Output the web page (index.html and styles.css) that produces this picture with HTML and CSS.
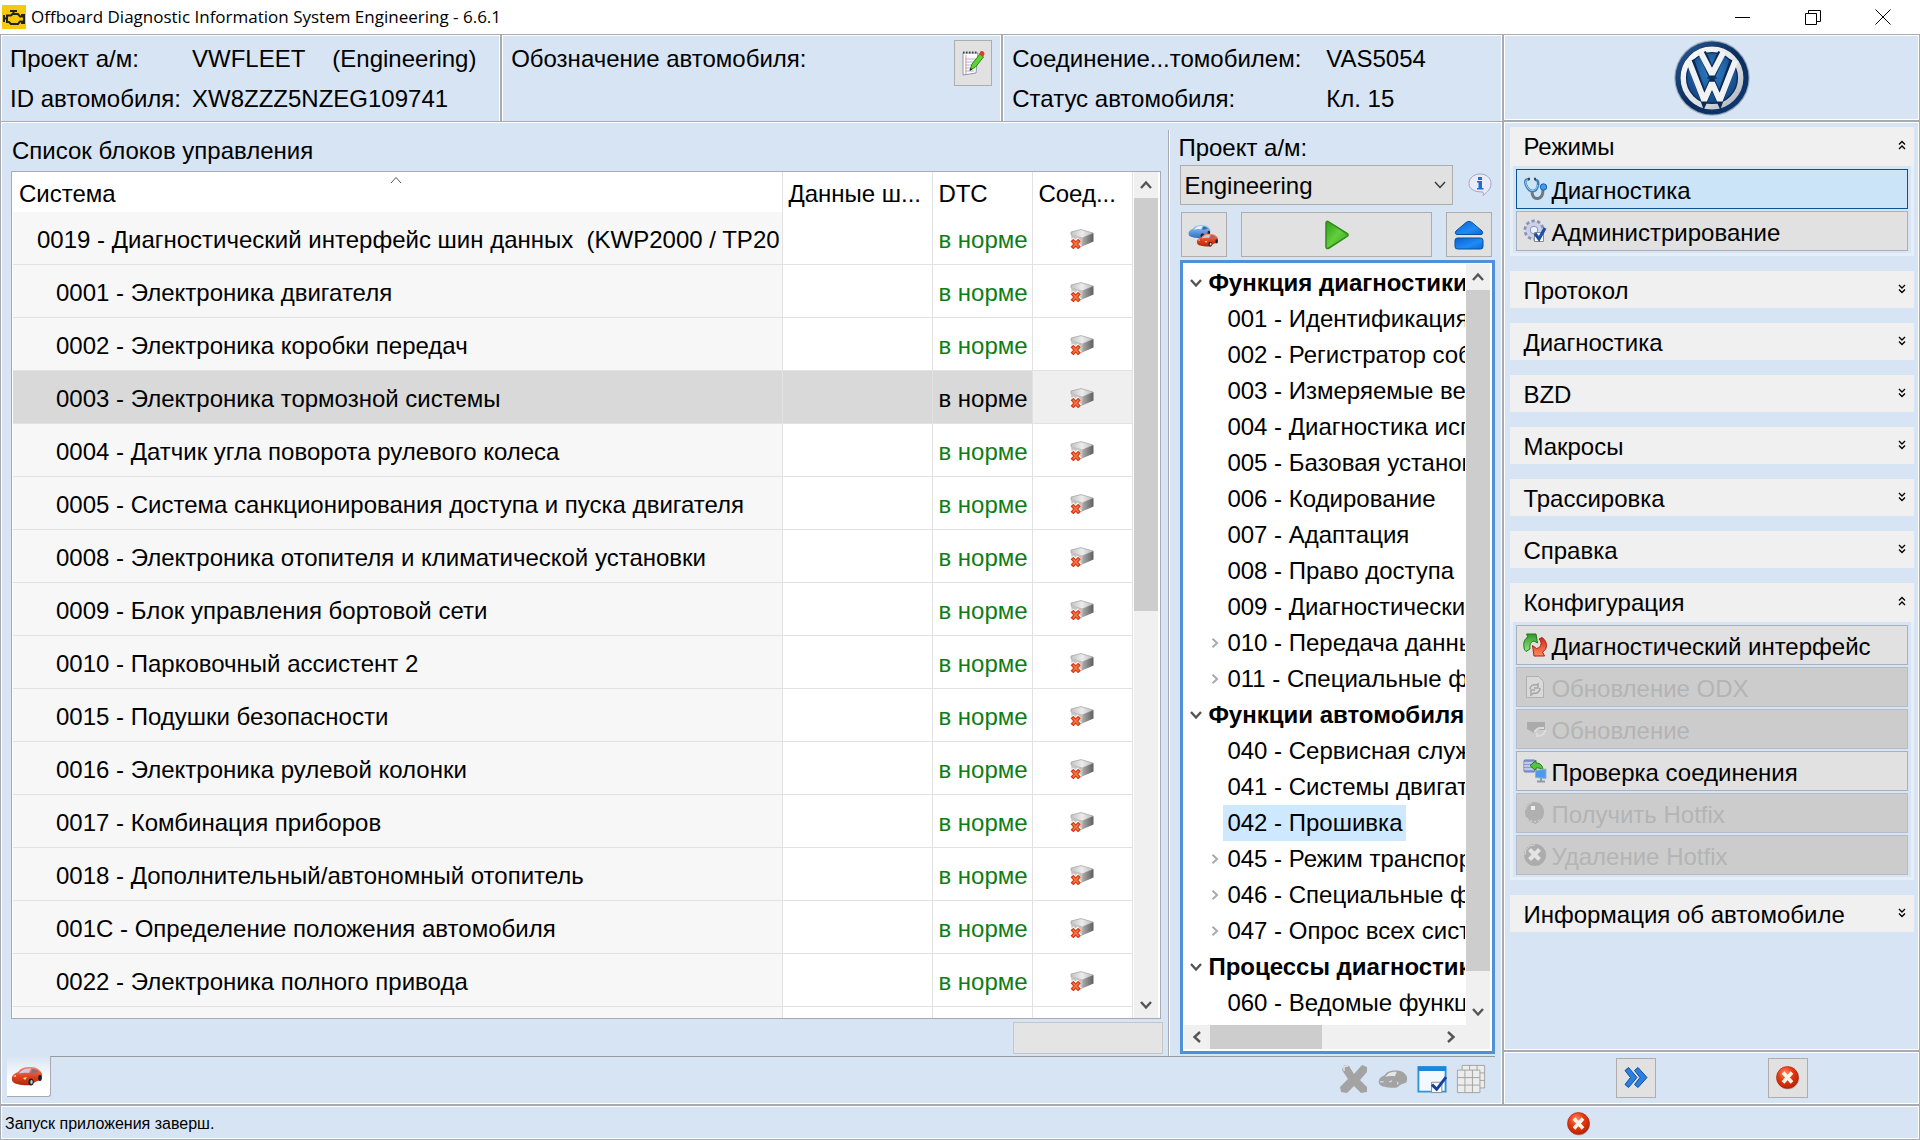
FILE: index.html
```html
<!DOCTYPE html>
<html lang="ru">
<head>
<meta charset="utf-8">
<meta name="viewport" content="width=device-width, initial-scale=1">
<title>Offboard Diagnostic Information System Engineering - 6.6.1</title>
<link rel="stylesheet" href="styles.css">
</head>
<body>
<svg class="sprite" width="0" height="0" aria-hidden="true">
  <defs>
    <linearGradient id="g-red" x1="0" y1="0" x2="0" y2="1"><stop offset="0" stop-color="#f58a6a"/><stop offset=".5" stop-color="#dd4523"/><stop offset="1" stop-color="#b3260d"/></linearGradient>
    <linearGradient id="g-bluecar" x1="0" y1="0" x2="0" y2="1"><stop offset="0" stop-color="#9cc8f5"/><stop offset="1" stop-color="#2c6fc4"/></linearGradient>
    <linearGradient id="g-blue" x1="0" y1="0" x2="1" y2="1"><stop offset="0" stop-color="#0a5fd0"/><stop offset=".6" stop-color="#1f8cf5"/><stop offset="1" stop-color="#0b66d6"/></linearGradient>
    <linearGradient id="g-green" x1="0" y1="0" x2="1" y2="1"><stop offset="0" stop-color="#2f9e1a"/><stop offset=".5" stop-color="#63cf3e"/><stop offset="1" stop-color="#2f9e1a"/></linearGradient>
    <linearGradient id="g-leaf" x1="0" y1="0" x2="0" y2="1"><stop offset="0" stop-color="#2f9a2a"/><stop offset="1" stop-color="#9be08a"/></linearGradient>
    <linearGradient id="g-flame" x1="0" y1="0" x2="0" y2="1"><stop offset="0" stop-color="#d8261a"/><stop offset="1" stop-color="#ff8a5c"/></linearGradient>
    <linearGradient id="g-silver" x1="0" y1="0" x2="1" y2="1"><stop offset="0" stop-color="#ffffff"/><stop offset=".6" stop-color="#dcdfe4"/><stop offset="1" stop-color="#aab0ba"/></linearGradient>
    <linearGradient id="g-top" x1="0" y1="0" x2="1" y2="0"><stop offset="0" stop-color="#c2c2c2"/><stop offset=".5" stop-color="#ececec"/><stop offset="1" stop-color="#bdbdbd"/></linearGradient>
    <linearGradient id="g-box" x1="0" y1="0" x2="1" y2="0"><stop offset="0" stop-color="#b5b5b5"/><stop offset="1" stop-color="#5e5e5e"/></linearGradient>
    <radialGradient id="g-ball" cx=".4" cy=".3" r=".7"><stop offset="0" stop-color="#ff8a66"/><stop offset=".5" stop-color="#e8370f"/><stop offset="1" stop-color="#b82405"/></radialGradient>
    <radialGradient id="g-vw" cx=".5" cy=".4" r=".6"><stop offset="0" stop-color="#2f7fc4"/><stop offset="1" stop-color="#0f3f7c"/></radialGradient>
    <linearGradient id="g-vwring" x1="0" y1="0" x2="1" y2="1"><stop offset="0" stop-color="#2c5d96"/><stop offset=".5" stop-color="#0a2c5c"/><stop offset="1" stop-color="#0d3a74"/></linearGradient>

    <symbol id="i-engine" viewBox="0 0 24 24"><path fill="#f6c90e" d="M0 0h24v24H0z"/><path fill="none" stroke="#222" stroke-width="2" d="M8 6h7M11.500 6v3M2 10v7M2 13.500h3M5 10.500h4l1.500-1.500H16l2 2.500h2v-1.500h2v8h-2v-1.500h-2L16 19H9l-2-2H5z"/></symbol>
    <symbol id="i-note" viewBox="0 0 24 28"><path fill="#fdfdff" stroke="#8c96b4" d="M2 4h15l-2 20-13 2z"/><path stroke="#a9b6d8" d="M4 10h11M4 13h11M4 16h10M4 19h10M4 22h9"/><path stroke="#e39a9a" d="M5 6v19"/><path stroke="#444" stroke-width="2" stroke-dasharray="1.500 1.500" d="M2 3.500h14"/><path fill="#5fd42d" stroke="#2c8a10" d="M9 21l2-6 8-10 3.500 3L14.500 18z"/><path fill="#d8402a" d="M18 5l1.500-2.500c1.500-1 4 0 4 2.500L22 8z"/><path fill="#222" d="M8.500 22l1-3 2 1.500z"/></symbol>
    <symbol id="i-module" viewBox="0 0 24 20"><path fill="url(#g-top)" stroke="#a8a8a8" stroke-width=".8" d="M1 3L11 .6 23 4 12.500 9 1 6z"/><path fill="url(#g-box)" d="M12 9l11.500-5v8.500L11 18z"/><path fill="#c4c4c4" d="M1 5.500L12.500 9 12 17 2 13z"/><path stroke="#fff" stroke-width="5.500" d="M1.500 10.500l8 8M9.500 10.500l-8 8"/><path stroke="#d93c14" stroke-width="4" d="M2 11l7.500 8M9.500 11L2 19"/><path stroke="#f37a4c" stroke-width="1.500" d="M3 12l5.500 6M8.500 12L3 18"/></symbol>
    <symbol id="i-car" viewBox="0 0 32 20"><path d="M1 11c1-3 4-4 6-5 3-4 6-5 12-5 5 0 8 1 11 5 1.500 2 1.500 5 0 8l-5 1.500-5 3.500C13 20 3 18 2 16c-1-1-1.500-3-1-5z"/></symbol>
    <symbol id="i-redcar" viewBox="0 0 32 20"><use href="#i-car" fill="url(#g-red)"/><path fill="#c5cbe8" d="M9 6c3-3 7-4 11-3.500L18 7c-3-.5-7-.5-10 .5z"/><path fill="#8d6c80" d="M21 3c3 0 5 1 6.500 3L20 8z"/><ellipse cx="20" cy="16" rx="2.600" ry="3.500" fill="#222"/><ellipse cx="20.500" cy="16" rx="1.200" ry="2" fill="#ccc"/><ellipse cx="29" cy="12" rx="1.800" ry="3" fill="#222"/><path fill="#ffe2a0" d="M2 10l3-1v2zM12 12l4-1-2 3z"/></symbol>
    <symbol id="i-bluecar" viewBox="0 0 32 20"><use href="#i-car" fill="url(#g-bluecar)"/><path fill="#e4f1fd" d="M9 6c3-3 7-4 11-3.500L18 7c-3-.5-7-.5-10 .5z"/><path fill="#356aa8" d="M21 3c3 0 5 1 6.500 3L20 8z"/><ellipse cx="20" cy="16" rx="2.600" ry="3.500" fill="#222"/><ellipse cx="29" cy="12" rx="1.800" ry="3" fill="#222"/></symbol>
    <symbol id="i-cars" viewBox="0 0 32 24"><use href="#i-bluecar" x="0" y="1" width="23" height="15"/><use href="#i-redcar" x="8" y="10" width="23" height="14"/></symbol>
    <symbol id="i-greycar" viewBox="0 0 32 20"><use href="#i-car" fill="#a3a3a3"/><path fill="#e6e6e6" d="M9 6c3-3 7-4 11-3.500L18 7c-3-.5-7-.5-10 .5z"/><path stroke="#eee" fill="none" d="M2 13h4M12 13l3-1M21 16v-3"/></symbol>
    <symbol id="i-play" viewBox="0 0 26 30"><path fill="url(#g-green)" stroke="#2b8a18" stroke-width="1.500" stroke-linejoin="round" d="M2 3c0-2 1.500-2 3-1l18 11.500c1.500 1 1.500 2 0 3L5 28c-1.500 1-3 .5-3-1z"/></symbol>
    <symbol id="i-eject" viewBox="0 0 30 30"><path fill="url(#g-blue)" stroke="#084f9e" stroke-linejoin="round" d="M2 11L12 2.500c2-1.500 4-1.500 6 0L28 11c1 1.500 1 3.500-1 3.500H3c-2 0-2-2-1-3.500z"/><rect x="1" y="18" width="28" height="11" rx="2.500" fill="url(#g-blue)" stroke="#084f9e"/></symbol>
    <symbol id="i-info" viewBox="0 0 24 24"><path fill="#e9ebfa" stroke="#9fa5cb" d="M12 1c6 0 11 3.500 11 9.500 0 5-3 8-8 12 .5-1.500.5-2.500 0-3.500C6 19 1 16 1 10.500S6 1 12 1z"/><path fill="#1c6fd0" d="M10 4h4v3h-4zM9 8h5v7h1.500v1.500H9V15h1.500V9.500H9z"/></symbol>
    <symbol id="i-steth" viewBox="0 0 24 24"><path fill="none" stroke="#6f7780" stroke-width="3" d="M9 14c0 5 2 8 6 7.500s5-4 5-9"/><path fill="none" stroke="#3f7fb8" stroke-width="2.600" d="M6 2.500C2.500 2 1.500 4 3 8s3 6 6.500 6 5-3 5.500-6 0-5.500-3-5"/><path fill="none" stroke="#a9d2f2" d="M5 3C2.500 3 2 5 3.500 8.500s3 5 6 5 4.500-2.500 5-5.500"/><circle cx="20.500" cy="10" r="3.200" fill="#3c9cf0" stroke="#1a5da8"/><path stroke="#444" stroke-width="2.400" d="M5 2h2M11 2h2"/></symbol>
    <symbol id="i-gear" viewBox="0 0 24 24"><circle cx="11" cy="11" r="8.800" fill="#c8cee6" stroke="#8b92b8" stroke-width="3.400" stroke-dasharray="3.200 2.330"/><circle cx="11" cy="11" r="7.800" fill="#cdd2e8"/><circle cx="11" cy="11" r="3.800" fill="#eef1fa" stroke="#8893bd"/><path fill="#fff" stroke="#8a8a8a" d="M11.500 13.500h9v9h-9z"/><path fill="none" stroke="#1c50a8" stroke-width="3.200" d="M12 14.500l4 5.500 6-11"/></symbol>
    <symbol id="i-cycle" viewBox="0 0 24 24"><path fill="url(#g-leaf)" stroke="#1d7a14" stroke-linejoin="round" d="M1 14C0 9 2 5.500 5 4L3.500 1H13l1.500 9-3.500-2C8 8.500 6.500 11 7 16L3 18.500C1.500 17 1 15.500 1 14z"/><path fill="url(#g-flame)" stroke="#a9230c" stroke-linejoin="round" d="M19 4.500c3 2 4.500 5 4.500 8 0 3-1.500 5-4 6.500l2 4H11L9.500 12.500l4 3c2.500-.5 4.500-2 4.500-5 0-2-.5-3-2-4.500z"/></symbol>
    <symbol id="i-odx" viewBox="0 0 24 24"><path fill="#d9d9d9" stroke="#b0b0b0" d="M3.500 1.500h12l5 5v16h-17z"/><path fill="none" stroke="#a6a6a6" stroke-width="1.500" d="M7 14c0-3 3-5 6-4l2-1v4h-4M17 13c0 4-3 6-6 5l-3 2v-5h4"/></symbol>
    <symbol id="i-upd" viewBox="0 0 24 24"><path fill="#ababab" d="M4 5h18v8H11v3L4 12z"/><path fill="none" stroke="#dcdcdc" stroke-width="2" d="M12 15c1-3 3-4 6-4h3M22 13c0 4-3 6-8 6v-3"/></symbol>
    <symbol id="i-conn" viewBox="0 0 24 24"><rect x="1" y="1" width="11" height="12" rx="1" fill="#8c9cd8" stroke="#6b78b0"/><path stroke="#f0f4ff" d="M1 4h10M1 7h10M1 10h10"/><path fill="#55c443" stroke="#207a17" stroke-linejoin="round" d="M7 6.500l6-5V4c4.500 0 7 3 7 7.500-2-2-4-3-7-2.500V12z"/><path fill="#4f9ae8" stroke="#8fb0d4" d="M12.500 11.500L23 10v9.500l-10.500-1z"/><path stroke="#8a98a8" stroke-width="2" d="M18 19v3M14 22.500h8"/></symbol>
    <symbol id="i-sphere" viewBox="0 0 24 24"><path fill="#b0b0b0" d="M11 1c6 0 10 4 10 10s-3 8-8 12C6 21 2 17 2 11S5 1 11 1z"/><path fill="#eee" d="M8 5h4v4H8z"/><path stroke="#ddd" fill="none" stroke-dasharray="2 2" d="M4 17c5 5 10 5 14 0"/><path stroke="#d4d4d4" fill="none" d="M2.500 9c1-4 3-6 6.500-7.500"/></symbol>
    <symbol id="i-delgrey" viewBox="0 0 24 24"><circle cx="12" cy="12" r="11" fill="#acacac"/><path fill="none" stroke="#d8d8d8" d="M2 12c0-6 4-10 10-10"/><path stroke="#e4e4e4" stroke-width="4" d="M6.500 6.500l10 10M16.500 6.500l-10 10"/></symbol>
    <symbol id="i-redx" viewBox="0 0 24 24"><circle cx="12" cy="12.500" r="11" fill="#a8a0a8" opacity=".6"/><circle cx="11.500" cy="11.500" r="11" fill="url(#g-ball)" stroke="#a8230a" stroke-width=".6"/><path stroke="#fff3e8" stroke-width="3.600" d="M7 6.500l9 10M16 6.500l-9 10"/></symbol>
    <symbol id="i-forward" viewBox="0 0 24 24"><path fill="#2a80e0" stroke="#0f4c9c" stroke-linejoin="round" d="M1 4.500L4.500 1.500 13 11.500 4.500 21.500 1 18.500 6.500 11.500z"/><path fill="#2a80e0" stroke="#0f4c9c" stroke-linejoin="round" d="M10.500 4.500L14 1.500 23 11.500 14 21.500 10.500 18.500 16 11.500z"/></symbol>
    <symbol id="i-bigx" viewBox="0 0 30 30"><path fill="#a3a3a3" d="M5 1l5 1 5 8 8-9 5 2v5l-7 8 7 7v5l-6 1-7-7-7 7-6-1-1-5 8-8-6-9z"/><path fill="none" stroke="#e4e4e4" stroke-width="1.500" d="M5 7V2.500l4-.5"/></symbol>
    <symbol id="i-window" viewBox="0 0 32 30"><path fill="#f4f8ff" stroke="#2f93d6" stroke-width="2" d="M1.500 2.500h29v26h-29z"/><path fill="#1c86dc" d="M1 1.500h30v5H1z"/><path fill="#fff" stroke="#888" d="M15.500 18.500h11v11h-11z"/><path fill="none" stroke="#15429c" stroke-width="3.200" d="M16 21l5 5 10-13"/></symbol>
    <symbol id="i-grid" viewBox="0 0 32 32"><path fill="#ececec" stroke="#a0a0a0" d="M6.500 1.500h24v24h-24zM14.500 1.500v8M22.500 1.500v24M6.500 9.500h24M22.500 17.500h8"/><path fill="#ececec" stroke="#a0a0a0" d="M1.500 6.500h24v24h-24zM9.500 6.500v24M17.500 6.500v24M1.500 14.500h24M1.500 22.500h24"/></symbol>
    <symbol id="i-up" viewBox="0 0 12 12"><path fill="none" stroke="currentColor" stroke-width="2.400" d="M1 9l5-5.500L11 9"/></symbol>
    <symbol id="i-down" viewBox="0 0 12 12"><path fill="none" stroke="currentColor" stroke-width="2.400" d="M1 3l5 5.500L11 3"/></symbol>
    <symbol id="i-left" viewBox="0 0 12 12"><path fill="none" stroke="currentColor" stroke-width="2.400" d="M9 1L3.500 6 9 11"/></symbol>
    <symbol id="i-right" viewBox="0 0 12 12"><path fill="none" stroke="currentColor" stroke-width="2.400" d="M3 1l5.500 5L3 11"/></symbol>
    <symbol id="i-thin-up" viewBox="0 0 12 8"><path fill="none" stroke="#555" d="M1 7l5-5.500L11 7"/></symbol>
    <symbol id="i-thin-down" viewBox="0 0 12 8"><path fill="none" stroke="#333" stroke-width="1.300" d="M1 1l5 5.500L11 1"/></symbol>
    <symbol id="i-collapse" viewBox="0 0 8 10"><path fill="none" stroke="#000" stroke-width="1.400" d="M1 4.500l3-3 3 3M1 9l3-3 3 3"/></symbol>
    <symbol id="i-expand" viewBox="0 0 8 10"><path fill="none" stroke="#000" stroke-width="1.400" d="M1 1l3 3 3-3M1 5.500l3 3 3-3"/></symbol>
    <symbol id="i-vw" viewBox="-40 -40 80 80"><circle r="39" fill="#c9d3df"/><circle r="38.500" fill="#8fa3ba"/><circle r="37.500" fill="url(#g-vwring)"/><circle r="29" fill="url(#g-vw)" stroke="#0a2a55" stroke-width="7"/><circle r="29.500" fill="none" stroke="url(#g-silver)" stroke-width="5.500"/><path fill="none" stroke="#0a2a55" stroke-width="8" d="M-22-18L-8 22 0 5 8 22 22-18M-10-26L0-3 10-26"/><path fill="none" stroke="#f1f2f4" stroke-width="6" stroke-linejoin="bevel" d="M-24-18L-8 23 0 5 8 23 24-18"/><path fill="none" stroke="#f1f2f4" stroke-width="6" stroke-linejoin="bevel" d="M-12-27L0-4 12-27"/><path stroke="#0e356b" stroke-width="1.600" d="M-5 0H5"/></symbol>
    <symbol id="i-min" viewBox="0 0 16 16"><path stroke="#000" d="M0 8.500h15"/></symbol>
    <symbol id="i-restore" viewBox="0 0 16 16"><path fill="none" stroke="#000" d="M.5 4.500h11v11H.5zM3.500 4V1.500h12v11H12"/></symbol>
    <symbol id="i-close" viewBox="0 0 16 16"><path stroke="#000" d="M.5.5l15 15M15.500.5l-15 15"/></symbol>
  </defs>
</svg>

<div class="app">
  <header class="titlebar">
    <svg class="icon-24"><use href="#i-engine"/></svg>
    <h1 class="titlebar-text">Offboard Diagnostic Information System Engineering - 6.6.1</h1>
    <div class="window-buttons">
      <button type="button" class="window-button" aria-label="Свернуть"><svg class="icon-16"><use href="#i-min"/></svg></button>
      <button type="button" class="window-button" aria-label="Восстановить"><svg class="icon-16"><use href="#i-restore"/></svg></button>
      <button type="button" class="window-button" aria-label="Закрыть"><svg class="icon-16"><use href="#i-close"/></svg></button>
    </div>
  </header>

  <div class="columns">
    <div class="left">
      <div class="info">
        <dl class="panel facts facts-project">
          <dt>Проект а/м:</dt><dd><span>VWFLEET</span><span>(Engineering)</span></dd>
          <dt>ID автомобиля:</dt><dd>XW8ZZZ5NZEG109741</dd>
        </dl>
        <div class="panel designation">
          <span>Обозначение автомобиля:</span>
          <button type="button" class="button note-button" aria-label="Изменить"><svg class="note-icon"><use href="#i-note"/></svg></button>
        </div>
        <dl class="panel facts facts-link">
          <dt>Соединение...томобилем:</dt><dd>VAS5054</dd>
          <dt>Статус автомобиля:</dt><dd>Кл. 15</dd>
        </dl>
      </div>

      <main class="panel main">
        <div class="work">
          <section class="units">
            <h2 class="units-title">Список блоков управления</h2>
            <div class="table-box">
              <div class="table-view">
                <table class="units-table">
                  <colgroup><col><col class="col-bus"><col class="col-dtc"><col class="col-link"></colgroup>
                  <thead>
                    <tr><th>Система<svg class="sort-mark"><use href="#i-thin-up"/></svg></th><th>Данные ш...</th><th>DTC</th><th>Соед...</th></tr>
                  </thead>
                  <tbody>
                    <tr class="root"><td>0019 - Диагностический интерфейс шин данных&nbsp; (KWP2000 / TP20 /</td><td></td><td>в норме</td><td><svg class="module"><use href="#i-module"/></svg></td></tr>
                    <tr><td>0001 - Электроника двигателя</td><td></td><td>в норме</td><td><svg class="module"><use href="#i-module"/></svg></td></tr>
                    <tr><td>0002 - Электроника коробки передач</td><td></td><td>в норме</td><td><svg class="module"><use href="#i-module"/></svg></td></tr>
                    <tr class="selected"><td>0003 - Электроника тормозной системы</td><td></td><td>в норме</td><td><svg class="module"><use href="#i-module"/></svg></td></tr>
                    <tr><td>0004 - Датчик угла поворота рулевого колеса</td><td></td><td>в норме</td><td><svg class="module"><use href="#i-module"/></svg></td></tr>
                    <tr><td>0005 - Система санкционирования доступа и пуска двигателя</td><td></td><td>в норме</td><td><svg class="module"><use href="#i-module"/></svg></td></tr>
                    <tr><td>0008 - Электроника отопителя и климатической установки</td><td></td><td>в норме</td><td><svg class="module"><use href="#i-module"/></svg></td></tr>
                    <tr><td>0009 - Блок управления бортовой сети</td><td></td><td>в норме</td><td><svg class="module"><use href="#i-module"/></svg></td></tr>
                    <tr><td>0010 - Парковочный ассистент 2</td><td></td><td>в норме</td><td><svg class="module"><use href="#i-module"/></svg></td></tr>
                    <tr><td>0015 - Подушки безопасности</td><td></td><td>в норме</td><td><svg class="module"><use href="#i-module"/></svg></td></tr>
                    <tr><td>0016 - Электроника рулевой колонки</td><td></td><td>в норме</td><td><svg class="module"><use href="#i-module"/></svg></td></tr>
                    <tr><td>0017 - Комбинация приборов</td><td></td><td>в норме</td><td><svg class="module"><use href="#i-module"/></svg></td></tr>
                    <tr><td>0018 - Дополнительный/автономный отопитель</td><td></td><td>в норме</td><td><svg class="module"><use href="#i-module"/></svg></td></tr>
                    <tr><td>001C - Определение положения автомобиля</td><td></td><td>в норме</td><td><svg class="module"><use href="#i-module"/></svg></td></tr>
                    <tr><td>0022 - Электроника полного привода</td><td></td><td>в норме</td><td><svg class="module"><use href="#i-module"/></svg></td></tr>
                    <tr><td></td><td></td><td></td><td></td></tr>
                  </tbody>
                </table>
              </div>
              <div class="scroll-v">
                <svg class="scroll-arrow"><use href="#i-up"/></svg>
                <div class="scroll-track"><div class="thumb thumb-units"></div></div>
                <svg class="scroll-arrow"><use href="#i-down"/></svg>
              </div>
            </div>
            <div class="units-foot"></div>
          </section>

          <section class="functions">
            <label class="project-label" for="project">Проект а/м:</label>
            <div class="project-row">
              <div class="select-wrap">
                <select id="project" class="select"><option>Engineering</option></select>
                <svg class="select-arrow"><use href="#i-thin-down"/></svg>
              </div>
              <svg class="icon-24"><use href="#i-info"/></svg>
            </div>
            <div class="actions">
              <button type="button" class="button action-small" aria-label="Автомобили"><svg class="cars-icon"><use href="#i-cars"/></svg></button>
              <button type="button" class="button action-wide" aria-label="Запустить"><svg class="play-icon"><use href="#i-play"/></svg></button>
              <button type="button" class="button action-small" aria-label="Развернуть"><svg class="eject-icon"><use href="#i-eject"/></svg></button>
            </div>
            <div class="tree-box">
              <div class="tree-main">
                <ul class="tree">
                  <li class="group"><svg class="twist"><use href="#i-down"/></svg><span>Функция диагностики</span></li>
                  <li><span>001 - Идентификация</span></li>
                  <li><span>002 - Регистратор соб</span></li>
                  <li><span>003 - Измеряемые вел</span></li>
                  <li><span>004 - Диагностика исп</span></li>
                  <li><span>005 - Базовая установ</span></li>
                  <li><span>006 - Кодирование</span></li>
                  <li><span>007 - Адаптация</span></li>
                  <li><span>008 - Право доступа</span></li>
                  <li><span>009 - Диагностический</span></li>
                  <li><svg class="twist"><use href="#i-right"/></svg><span>010 - Передача данны</span></li>
                  <li><svg class="twist"><use href="#i-right"/></svg><span>011 - Специальные ф</span></li>
                  <li class="group"><svg class="twist"><use href="#i-down"/></svg><span>Функции автомобиля</span></li>
                  <li><span>040 - Сервисная служ</span></li>
                  <li><span>041 - Системы двигат</span></li>
                  <li class="current"><span>042 - Прошивка</span></li>
                  <li><svg class="twist"><use href="#i-right"/></svg><span>045 - Режим транспор</span></li>
                  <li><svg class="twist"><use href="#i-right"/></svg><span>046 - Специальные ф</span></li>
                  <li><svg class="twist"><use href="#i-right"/></svg><span>047 - Опрос всех сист</span></li>
                  <li class="group"><svg class="twist"><use href="#i-down"/></svg><span>Процессы диагностик</span></li>
                  <li><span>060 - Ведомые функц</span></li>
                </ul>
                <div class="scroll-v">
                  <svg class="scroll-arrow"><use href="#i-up"/></svg>
                  <div class="scroll-track"><div class="thumb thumb-tree"></div></div>
                  <svg class="scroll-arrow"><use href="#i-down"/></svg>
                </div>
              </div>
              <div class="scroll-h">
                <svg class="scroll-arrow"><use href="#i-left"/></svg>
                <div class="scroll-track"><div class="thumb thumb-wide"></div></div>
                <svg class="scroll-arrow"><use href="#i-right"/></svg>
              </div>
            </div>
          </section>
        </div>

        <div class="tabs">
          <button type="button" class="tab" aria-label="Автомобиль"><svg class="car-icon"><use href="#i-redcar"/></svg></button>
          <div class="tab-tools">
            <button type="button" class="tool" aria-label="Удалить" disabled><svg><use href="#i-bigx"/></svg></button>
            <button type="button" class="tool" aria-label="Автомобиль" disabled><svg><use href="#i-greycar"/></svg></button>
            <button type="button" class="tool" aria-label="Выбор"><svg><use href="#i-window"/></svg></button>
            <button type="button" class="tool" aria-label="Таблица" disabled><svg><use href="#i-grid"/></svg></button>
          </div>
        </div>
      </main>
    </div>

    <aside class="right">
      <div class="panel brand"><svg class="logo" role="img" aria-label="Volkswagen"><use href="#i-vw"/></svg></div>
      <nav class="panel sidebar">
        <section class="fold open">
          <button type="button" class="fold-head" aria-expanded="true">Режимы<svg class="fold-mark"><use href="#i-collapse"/></svg></button>
          <div class="fold-body">
            <button type="button" class="nav-button active"><svg class="icon-24"><use href="#i-steth"/></svg><span>Диагностика</span></button>
            <button type="button" class="nav-button"><svg class="icon-24"><use href="#i-gear"/></svg><span>Администрирование</span></button>
          </div>
        </section>
        <section class="fold"><button type="button" class="fold-head" aria-expanded="false">Протокол<svg class="fold-mark"><use href="#i-expand"/></svg></button></section>
        <section class="fold"><button type="button" class="fold-head" aria-expanded="false">Диагностика<svg class="fold-mark"><use href="#i-expand"/></svg></button></section>
        <section class="fold"><button type="button" class="fold-head" aria-expanded="false">BZD<svg class="fold-mark"><use href="#i-expand"/></svg></button></section>
        <section class="fold"><button type="button" class="fold-head" aria-expanded="false">Макросы<svg class="fold-mark"><use href="#i-expand"/></svg></button></section>
        <section class="fold"><button type="button" class="fold-head" aria-expanded="false">Трассировка<svg class="fold-mark"><use href="#i-expand"/></svg></button></section>
        <section class="fold"><button type="button" class="fold-head" aria-expanded="false">Справка<svg class="fold-mark"><use href="#i-expand"/></svg></button></section>
        <section class="fold open">
          <button type="button" class="fold-head" aria-expanded="true">Конфигурация<svg class="fold-mark"><use href="#i-collapse"/></svg></button>
          <div class="fold-body">
            <button type="button" class="nav-button"><svg class="icon-24"><use href="#i-cycle"/></svg><span>Диагностический интерфейс</span></button>
            <button type="button" class="nav-button" disabled><svg class="icon-24"><use href="#i-odx"/></svg><span>Обновление ODX</span></button>
            <button type="button" class="nav-button" disabled><svg class="icon-24"><use href="#i-upd"/></svg><span>Обновление</span></button>
            <button type="button" class="nav-button"><svg class="icon-24"><use href="#i-conn"/></svg><span>Проверка соединения</span></button>
            <button type="button" class="nav-button" disabled><svg class="icon-24"><use href="#i-sphere"/></svg><span>Получить Hotfix</span></button>
            <button type="button" class="nav-button" disabled><svg class="icon-24"><use href="#i-delgrey"/></svg><span>Удаление Hotfix</span></button>
          </div>
        </section>
        <section class="fold"><button type="button" class="fold-head" aria-expanded="false">Информация об автомобиле<svg class="fold-mark"><use href="#i-expand"/></svg></button></section>
      </nav>
      <div class="panel commands">
        <button type="button" class="button command" aria-label="Далее"><svg class="icon-24"><use href="#i-forward"/></svg></button>
        <button type="button" class="button command" aria-label="Отмена"><svg class="icon-24"><use href="#i-redx"/></svg></button>
      </div>
    </aside>
  </div>

  <footer class="panel status">
    <span class="status-text">Запуск приложения заверш.</span>
    <svg class="icon-24"><use href="#i-redx"/></svg>
  </footer>
</div>
</body>
</html>
```
FILE: styles.css
```css
:root {
  --bg: #d7e4f3;
  --line: #a7aab0;
  --cell-line: #e2e2e2;
  --face: #e1e1e1;
  --bar: #f0f0f0;
  --thumb: #cdcdcd;
}

* { box-sizing: border-box; }

body {
  margin: 0;
  font-family: "Liberation Sans", Arial, sans-serif;
  font-size: 24px;
  line-height: 36px;
  color: #000;
  background: #fff;
}

button, select {
  font: inherit;
  color: inherit;
  padding: 0;
  margin: 0;
  border-radius: 0;
}

h1, h2, dl, dd, ul { margin: 0; padding: 0; font-weight: 400; }
svg { display: block; flex: none; }

.sprite { position: absolute; }
.icon-16 { width: 16px; height: 16px; }
.icon-24 { width: 24px; height: 24px; }

.app {
  display: flex;
  flex-direction: column;
  height: 100vh;
}

.panel {
  background: var(--bg);
  border: 1px solid var(--line);
  box-shadow: inset 0 0 0 1px #fff;
}

.button {
  display: flex;
  align-items: center;
  justify-content: center;
  background: var(--face);
  border: 1px solid #adadad;
}

/* Title bar */
.titlebar {
  display: flex;
  align-items: center;
  gap: 5px;
  height: 34px;
  padding: 0 2px;
  flex: none;
}
.titlebar-text {
  font-family: "Open Sans", "Noto Sans", sans-serif;
  font-size: 17px;
  line-height: 24px;
}
.window-buttons { display: flex; margin-left: auto; }
.window-button {
  display: flex;
  align-items: center;
  justify-content: center;
  width: 70px;
  height: 32px;
  border: 0;
  background: none;
}

/* Columns */
.columns { display: flex; flex: 1; min-height: 0; }
.left { display: flex; flex-direction: column; flex: 1; min-width: 0; }
.right { display: flex; flex-direction: column; width: 21.7%; flex: none; }

.info { display: grid; grid-template-columns: repeat(3, 1fr); height: 87px; flex: none; }
.facts {
  display: grid;
  align-content: start;
  grid-auto-rows: 40px;
  line-height: 40px;
  padding: 4px 9px;
  white-space: nowrap;
}
.facts-project { grid-template-columns: 182px 1fr; }
.facts-project dd { display: flex; gap: 27px; }
.facts-link { grid-template-columns: 314px 1fr; }
.designation {
  display: flex;
  justify-content: space-between;
  align-items: flex-start;
  line-height: 40px;
  padding: 4px 9px;
}
.note-button { width: 38px; height: 46px; margin-top: 1px; }
.note-icon { width: 24px; height: 28px; }

/* Main area */
.main { display: flex; flex-direction: column; flex: 1; min-height: 0; }
.work { display: flex; flex: 1; min-height: 0; padding-top: 8px; }

.units {
  display: flex;
  flex-direction: column;
  flex: 1;
  min-width: 0;
  padding: 0 5px 2px 10px;
  border-right: 1px solid var(--line);
}
.units-title { font-size: 24px; line-height: 41px; padding-left: 1px; flex: none; }
.table-box {
  display: flex;
  flex: 1;
  min-height: 0;
  margin-right: 2px;
  border: 1px solid var(--line);
  background: #fff;
  padding: 0 2px 0 1px;
}
.table-view { flex: 1; min-width: 0; overflow: hidden; }
.units-table {
  width: 100%;
  table-layout: fixed;
  border-collapse: separate;
  border-spacing: 0;
}
.col-bus { width: 150px; }
.col-dtc { width: 100px; }
.col-link { width: 100px; }
.units-table th {
  position: relative;
  height: 40px;
  padding: 4px 0 0 5px;
  border-right: 1px solid var(--cell-line);
  font-weight: 400;
  text-align: left;
  line-height: 36px;
  white-space: nowrap;
}
.sort-mark { position: absolute; left: 49%; top: 4px; width: 12px; height: 8px; }
.units-table td {
  height: 53px;
  padding: 4px 0 0 5px;
  border-right: 1px solid var(--cell-line);
  border-bottom: 1px solid var(--cell-line);
  overflow: hidden;
  white-space: nowrap;
  line-height: 36px;
}
.units-table td:first-child { padding-left: 43px; background: #f7f7f7; }
.units-table .root td:first-child { padding-left: 24px; }
.units-table th:first-child { padding-left: 6px; }
.units-table td:nth-child(3) { color: #0f7d15; }
.units-table td:nth-child(4) { padding: 2px 2px 0 0; }
.units-table .selected td,
.units-table .selected td:first-child { background: #d9d9d9; color: #000; }
.units-table .selected td:last-child { background: #efefef; }
.module { width: 24px; height: 20px; margin: 0 auto; }
.units-foot {
  align-self: flex-end;
  width: 150px;
  height: 32px;
  margin-top: 3px;
  background: #e4e4e4;
  border: 1px solid #c6c6c6;
  flex: none;
}

/* Scroll bars */
.scroll-v {
  display: flex;
  flex-direction: column;
  width: 24px;
  background: var(--bar);
  flex: none;
  margin-left: 1px;
}
.scroll-h { display: flex; height: 24px; background: var(--bar); flex: none; padding-right: 26px; }
.scroll-arrow { width: 26px; height: 26px; padding: 7px; color: #555; }
.scroll-v .scroll-arrow { width: 24px; padding: 7px 6px; }
.scroll-h .scroll-arrow { height: 24px; padding: 6px; }
.scroll-track { flex: 1; min-height: 0; }
.thumb { background: var(--thumb); }
.thumb-units { height: 52%; }
.thumb-tree { height: 96%; }
.thumb-wide { width: 49%; height: 100%; }

/* Function tree */
.functions {
  display: flex;
  flex-direction: column;
  width: 333px;
  flex: none;
  padding: 0 7px 2px 8px;
  border-left: 1px solid #fff;
}
.project-label { line-height: 35px; flex: none; }
.project-row { display: flex; align-items: center; gap: 15px; padding-left: 2px; flex: none; }
.select-wrap { position: relative; flex: 1; }
.select {
  display: block;
  width: 100%;
  height: 40px;
  padding: 2px 0 0 3px;
  appearance: none;
  background: var(--face);
  border: 1px solid #adadad;
}
.select-arrow { position: absolute; right: 7px; top: 16px; width: 12px; height: 8px; pointer-events: none; }
.project-row .icon-24 { margin-right: 3px; }
.actions { display: flex; gap: 14px; margin: 7px 3px 3px; flex: none; }
.action-small { width: 46px; height: 45px; }
.action-wide { flex: 1; height: 45px; }
.cars-icon { width: 32px; height: 24px; }
.play-icon { width: 26px; height: 30px; }
.eject-icon { width: 30px; height: 30px; }

.tree-box {
  display: flex;
  flex-direction: column;
  flex: 1;
  min-height: 0;
  margin-left: 2px;
  background: #fff;
  border: 3px solid #4f91d9;
  padding: 1px 2px 2px 1px;
}
.tree-main { display: flex; flex: 1; min-height: 0; }
.tree { flex: 1; min-width: 0; overflow: hidden; list-style: none; padding-top: 1px; }
.tree li {
  display: flex;
  align-items: center;
  height: 36px;
  padding-left: 39px;
  white-space: nowrap;
}
.tree span { flex: none; padding-left: 4px; }
.tree .twist { width: 10px; height: 10px; margin: 0 3px 0 -13px; color: #aaa; }
.tree .group { padding-left: 24px; font-weight: 700; }
.tree .group .twist { width: 12px; height: 12px; margin: 0 3px 0 -18px; color: #555; }
.tree .group span { padding-left: 3px; }
.tree .current span { padding-right: 4px; background: #cde8ff; }

/* Bottom tab strip */
.tabs {
  display: flex;
  justify-content: space-between;
  height: 48px;
  padding: 0 7px 6px 6px;
  flex: none;
}
.tab {
  width: 44px;
  height: 41px;
  border: 1px solid var(--line);
  border-width: 0 1px 1px 0;
  border-radius: 0 0 3px 0;
  background: linear-gradient(#d7e4f3, #fff 60%);
  padding-left: 4px;
}
.car-icon { width: 32px; height: 20px; }
.tab-tools {
  display: flex;
  flex: 1;
  justify-content: flex-end;
  align-items: center;
  gap: 9px;
  padding-right: 9px;
  padding-top: 2px;
  border-top: 1px solid #96999e;
}
.tool { width: 30px; height: 30px; border: 0; background: none; }
.tool svg { width: 30px; height: 30px; }

/* Right side */
.brand { display: flex; align-items: center; justify-content: center; height: 87px; flex: none; }
.logo { width: 78px; height: 78px; }
.sidebar {
  display: flex;
  flex-direction: column;
  gap: 15px;
  flex: 1;
  min-height: 0;
  overflow: hidden;
  padding: 5px 5px 0 6px;
}
.fold { flex: none; }
.fold-head {
  display: flex;
  align-items: center;
  justify-content: space-between;
  width: 100%;
  height: 37px;
  padding: 2px 8px 0 13px;
  border: 0;
  background: #f0f0f0;
}
.open .fold-head { height: 39px; padding-top: 0; }
.fold-mark { width: 8px; height: 10px; margin-bottom: 4px; }
.fold-body {
  display: flex;
  flex-direction: column;
  gap: 2px;
  padding: 3px 3px 2px;
  border: 3px solid #e6eef8;
  border-top: 0;
}
.nav-button {
  display: flex;
  align-items: center;
  gap: 4px;
  height: 40px;
  padding: 0 6px;
  background: var(--face);
  border: 1px solid #a9b0bb;
}
.nav-button span { padding-top: 4px; }
.nav-button.active { background: #cce4f7; border-color: #0b5394; }
.nav-button:disabled { background: #cccccc; border-color: #b4bccb; color: #b4b4b4; }
.commands {
  display: flex;
  justify-content: center;
  align-items: center;
  gap: 112px;
  height: 54px;
  flex: none;
}
.command { width: 40px; height: 40px; }

/* Status bar */
.status {
  display: flex;
  align-items: center;
  height: 35px;
  padding: 2px 0 0 4px;
  flex: none;
}
.status-text { width: 81.6%; font-size: 16px; line-height: 24px; }
```
